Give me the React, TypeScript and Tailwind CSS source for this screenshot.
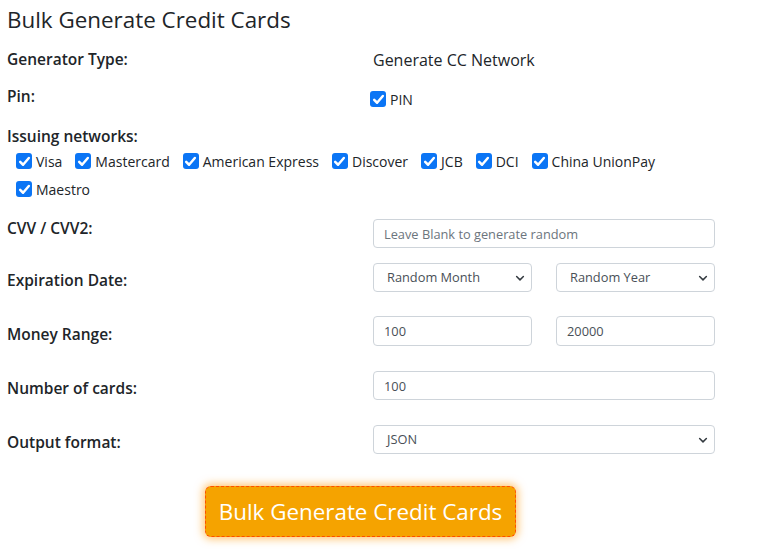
import React from "react";

const NETWORKS = ["Visa", "Mastercard", "American Express", "Discover", "JCB", "DCI", "China UnionPay", "Maestro"];

function Check({ label }: { label: string }) {
  return (
    <label className="flex items-center gap-[4px] h-[28px]">
      <span className="w-[16px] h-[16px] rounded-[3px] bg-[#0b75f5] flex items-center justify-center flex-shrink-0">
        <svg width="13" height="13" viewBox="0 0 12 12" fill="none">
          <path d="M2 6.3 L4.7 9 L10 2.8" stroke="white" strokeWidth="2.3" strokeLinecap="round" strokeLinejoin="round" />
        </svg>
      </span>
      <span className="text-[14px]">{label}</span>
    </label>
  );
}

const inputCls =
  "h-[29px] w-full border border-[#ced4da] rounded-[4px] px-[10px] text-[12.8px] text-[#495057] bg-white outline-none";

function Select({ value }: { value: string }) {
  return (
    <div className={inputCls + " flex items-center justify-between pr-[5px] pl-[13px]"}>
      <span>{value}</span>
      <svg width="12" height="12" viewBox="0 0 16 16" fill="none">
        <path d="M3.5 6 L8 10.5 L12.5 6" stroke="#343a40" strokeWidth="2" strokeLinecap="round" strokeLinejoin="round" />
      </svg>
    </div>
  );
}

const labelCls = "w-[366px] text-[15.5px] font-semibold";

export default function App() {
  return (
    <div
      className="w-[776px] h-[551px] bg-white text-[#212529] pl-[7px] overflow-hidden"
      style={{ fontFamily: '"Open Sans", "Liberation Sans", sans-serif' }}
    >
      <h1 className="text-[22.4px] leading-[30px] pt-[5px] font-normal">Bulk Generate Credit Cards</h1>

      {/* Generator type */}
      <div className="flex items-center h-[24px] mt-[13px]">
        <div className={labelCls}>Generator Type:</div>
        <div className="text-[16px]">Generate CC Network</div>
      </div>

      {/* Pin */}
      <div className="flex items-start h-[24px] mt-[12px]">
        <div className={labelCls + " leading-[24px]"}>Pin:</div>
        <div className="pt-[1px] -ml-[3px]">
          <Check label="PIN" />
        </div>
      </div>

      {/* Issuing networks */}
      <div className="mt-[17px] text-[15.5px] font-semibold leading-[22px]">Issuing networks:</div>
      <div className="flex flex-wrap w-[732px] pl-[9px] gap-x-[13px]">
        {NETWORKS.map((n) => (
          <Check key={n} label={n} />
        ))}
      </div>

      {/* CVV */}
      <div className="flex items-start mt-[16px]">
        <div className={labelCls + " leading-[18px]"}>CVV / CVV2:</div>
        <div className="w-[342px]">
          <input className={inputCls + " placeholder:text-[#6c757d]"} placeholder="Leave Blank to generate random" />
        </div>
      </div>

      {/* Expiration */}
      <div className="flex items-start mt-[15px]">
        <div className={labelCls + " leading-[24px] pt-[5px]"}>Expiration Date:</div>
        <div className="w-[342px] grid grid-cols-2 gap-[24px]">
          <Select value="Random Month" />
          <Select value="Random Year" />
        </div>
      </div>

      {/* Money range */}
      <div className="flex items-start mt-[24px]">
        <div className={labelCls + " leading-[24px] pt-[6px]"}>Money Range:</div>
        <div className="w-[342px] grid grid-cols-2 gap-[24px]">
          <input className={inputCls + " h-[30px]"} defaultValue="100" />
          <input className={inputCls + " h-[30px]"} defaultValue="20000" />
        </div>
      </div>

      {/* Number of cards */}
      <div className="flex items-start mt-[25px]">
        <div className={labelCls + " leading-[24px] pt-[5px]"}>Number of cards:</div>
        <div className="w-[342px]">
          <input className={inputCls} defaultValue="100" />
        </div>
      </div>

      {/* Output format */}
      <div className="flex items-start mt-[25px]">
        <div className={labelCls + " leading-[24px] pt-[5px]"}>Output format:</div>
        <div className="w-[342px]">
          <Select value="JSON" />
        </div>
      </div>

      <button className="mt-[32px] ml-[198px] w-[311px] h-[51px] bg-[#f5a300] text-white text-[22.4px] rounded-[6px] border border-dashed border-[#ff4d00] shadow-[0_0_8px_2px_rgba(255,150,0,0.55)]">
        Bulk Generate Credit Cards
      </button>
    </div>
  );
}
